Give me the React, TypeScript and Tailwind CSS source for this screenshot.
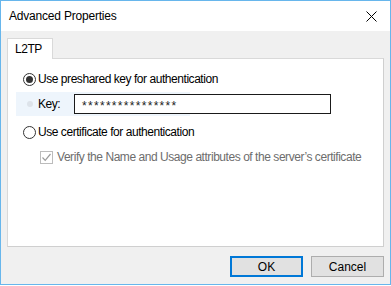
import React from "react";

function Radio({ checked }: { checked?: boolean }) {
  return (
    <span className="flex h-[13px] w-[13px] shrink-0 items-center justify-center rounded-full border border-[#333333] bg-white">
      {checked && <span className="h-[7px] w-[7px] rounded-full bg-[#333333]" />}
    </span>
  );
}

export default function App() {
  return (
    <div
      className="flex h-[285px] w-[391px] flex-col border border-[#67b6ec] bg-[#f0f0f0] text-[12px] text-black"
      style={{ fontFamily: '"Liberation Sans", Arial, sans-serif' }}
    >
      {/* title bar */}
      <div className="flex h-[30px] shrink-0 items-center justify-between bg-white pl-[8px] pr-[10px]">
        <span className="tracking-[-0.2px]">Advanced Properties</span>
        <svg width="11" height="11" viewBox="0 0 11 11" className="mr-[3px]">
          <path d="M0.5 0.5 L10.5 10.5 M10.5 0.5 L0.5 10.5" stroke="#000" strokeWidth="1" />
        </svg>
      </div>

      {/* body */}
      <div className="flex flex-1 flex-col px-[6px] pt-[7px] tracking-[-0.45px]">
        <div className="relative z-10 -mb-px flex h-[21px] w-[46px] items-center border border-b-0 border-[#d9d9d9] bg-white pl-[7px]">
          L2TP
        </div>
        <div className="flex h-[189px] flex-col border border-[#d9d9d9] border-b-[#cfcfcf] border-r-[#cfcfcf] bg-white pl-[15px] pt-[13px]">
          <div className="flex h-[14px] items-center gap-[2px]">
            <Radio checked />
            <span>Use preshared key for authentication</span>
          </div>

          <div className="mt-[6px] flex h-[24px] items-center">
            <div className="-ml-[7px] flex h-[24px] w-[174px] shrink-0 items-center bg-[#eef5fc] pl-[11px]">
              <span className="h-[6px] w-[6px] rounded-full bg-[#dde3ea]" />
              <span className="ml-[5px]">Key:</span>
            </div>
            <div className="relative -ml-[116px] flex h-[20px] w-[257px] items-center border border-[#1a1a1a] bg-white pl-[7px] pt-[3px] text-[#222] tracking-[1.3px]">
              ****************
            </div>
          </div>

          <div className="mt-[9px] flex h-[14px] items-center gap-[2px]">
            <Radio />
            <span>Use certificate for authentication</span>
          </div>

          <div className="mt-[11px] ml-[17px] flex h-[14px] items-center gap-[4px] text-[#6d6d6d]">
            <span className="flex h-[13px] w-[13px] shrink-0 items-center justify-center border border-[#bcbcbc] bg-white">
              <svg width="11" height="11" viewBox="0 0 11 11">
                <path d="M1.5 5.5 L4.2 8.3 L9.5 2" fill="none" stroke="#9a9a9a" strokeWidth="1.2" />
              </svg>
            </span>
            <span>Verify the Name and Usage attributes of the server’s certificate</span>
          </div>
        </div>

        <div className="mt-[9px] flex justify-end gap-[8px] tracking-normal">
          <button className="h-[21px] w-[73px] border-2 border-[#0078d7] bg-[#e1e1e1] text-[12px]">OK</button>
          <button className="h-[21px] w-[73px] border border-[#adadad] bg-[#e1e1e1] text-[12px]">Cancel</button>
        </div>
      </div>
    </div>
  );
}
